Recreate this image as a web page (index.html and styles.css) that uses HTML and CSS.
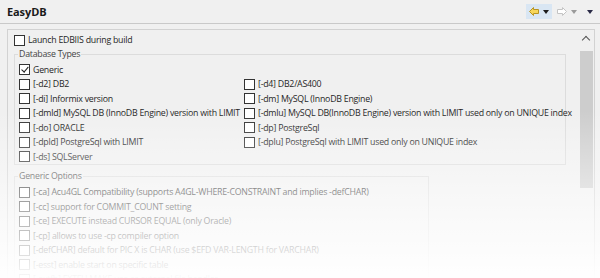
FILE: index.html
```html
<!DOCTYPE html>
<html lang="en">
<head>
    <meta charset="UTF-8">
    <title>EasyDB</title>
    <link rel="stylesheet" href="styles.css">
</head>
<body>
<div class="view">
    <div class="titlebar">
        <span class="title">EasyDB</span>
        <div class="tools">
            <span class="tool active">
                <svg width="10" height="9" viewBox="0 0 10 9"><path d="M0.5 4.5 L4.5 0.5 L4.5 2.5 L9.5 2.5 L9.5 6.5 L4.5 6.5 L4.5 8.5 Z" fill="#f7d65a" stroke="#b89422"/></svg>
                <span class="tri"></span>
            </span>
            <span class="tool">
                <svg width="10" height="9" viewBox="0 0 10 9"><path d="M9.5 4.5 L5.5 0.5 L5.5 2.5 L0.5 2.5 L0.5 6.5 L5.5 6.5 L5.5 8.5 Z" fill="#fff" stroke="#c4c4c4"/></svg>
                <span class="tri light"></span>
            </span>
            <span class="tool"><span class="tri dark"></span></span>
        </div>
    </div>

    <div class="frame">
        <div class="content">
            <label class="check top"><span class="box"></span>Launch EDBIIS during build</label>

            <fieldset class="group">
                <legend>Database Types</legend>
                <label class="check"><span class="box checked"></span>Generic</label>
                <div class="cols">
                    <label class="check"><span class="box"></span>[-d2] DB2</label>
                    <label class="check"><span class="box"></span>[-d4] DB2/AS400</label>
                    <label class="check"><span class="box"></span>[-di] Informix version</label>
                    <label class="check"><span class="box"></span>[-dm] MySQL (InnoDB Engine)</label>
                    <label class="check"><span class="box"></span>[-dmld] MySQL DB (InnoDB Engine) version with LIMIT</label>
                    <label class="check"><span class="box"></span>[-dmlu] MySQL DB(InnoDB Engine) version with LIMIT used only on UNIQUE index</label>
                    <label class="check"><span class="box"></span>[-do] ORACLE</label>
                    <label class="check"><span class="box"></span>[-dp] PostgreSql</label>
                    <label class="check"><span class="box"></span>[-dpld] PostgreSql with LIMIT</label>
                    <label class="check"><span class="box"></span>[-dplu] PostgreSql with LIMIT used only on UNIQUE index</label>
                    <label class="check"><span class="box"></span>[-ds] SQLServer</label>
                </div>
            </fieldset>

            <fieldset class="group narrow">
                <legend>Generic Options</legend>
                <label class="check"><span class="box"></span>[-ca] Acu4GL Compatibility (supports A4GL-WHERE-CONSTRAINT and implies -defCHAR)</label>
                <label class="check"><span class="box"></span>[-cc] support for COMMIT_COUNT setting</label>
                <label class="check"><span class="box"></span>[-ce] EXECUTE instead CURSOR EQUAL (only Oracle)</label>
                <label class="check"><span class="box"></span>[-cp] allows to use -cp compiler option</label>
                <label class="check"><span class="box"></span>[-defCHAR] default for PIC X is CHAR (use $EFD VAR-LENGTH for VARCHAR)</label>
                <label class="check"><span class="box"></span>[-esst] enable start on specific table</label>
                <label class="check"><span class="box"></span>[-extfh] EXTFH MAKE use as external file handler</label>
            </fieldset>
        </div>
        <div class="scrollbar">
            <span class="arrow"></span>
            <span class="thumb"></span>
        </div>
    </div>
    <div class="fade"></div>
</div>
</body>
</html>
```

FILE: styles.css
```css
html, body { margin: 0; }
body {
    font-family: "Open Sans", "Noto Sans", sans-serif;
    font-size: 8.8px;
    letter-spacing: -0.25px;
    color: #262626;
    background: #f0f0f0;
    width: 600px;
    height: 278px;
    overflow: hidden;
}
.view { position: relative; height: 278px; overflow: hidden; }

/* -------- title bar -------- */
.titlebar {
    display: flex;
    align-items: center;
    justify-content: space-between;
    height: 23px;
    padding: 0 4px 0 7px;
    border-bottom: 1px solid #c9c9c9;
}
.title { font-weight: 700; font-size: 11px; letter-spacing: -0.1px; color: #1a1a1a; }
.tools { display: flex; align-items: center; gap: 2px; }
.tool {
    display: flex; align-items: center; gap: 4px;
    height: 15px; padding: 0 3px;
}
.tool.active { background: #d9e6f3; }
.tool svg { display: block; }
.tri {
    width: 0; height: 0;
    border-left: 3.5px solid transparent;
    border-right: 3.5px solid transparent;
    border-top: 4px solid #1c1c1c;
}
.tri.light { border-top-color: #9a9a9a; }
.tri.dark { border-top-color: #2a2a46; margin-left: 2px; }

/* -------- scrolled frame -------- */
.frame {
    display: flex;
    margin: 5px 5px 0 7px;
    height: 260px;
    border: 1px solid #d2d2d2;
    background: #f0f0f0;
}
.content { flex: 1; padding: 3px 13px 0 6px; min-width: 0; overflow: hidden; }
.scrollbar {
    width: 14px;
    padding-right: 1px;
    display: flex; flex-direction: column; align-items: center;
    background: #f0f0f0;
}
.arrow {
    margin-top: 7px;
    width: 5px; height: 5px;
    border-left: 1.5px solid #555;
    border-top: 1.5px solid #555;
    transform: rotate(45deg);
}
.thumb {
    margin-top: 8px;
    width: 13px; height: 137px;
    background: #cdcdcd;
}

/* -------- checkboxes -------- */
.check {
    display: flex; align-items: center;
    height: 14.5px;
    white-space: nowrap;
}
.box {
    width: 9px; height: 9px;
    border: 1px solid #333;
    background: #fff;
    margin-right: 3px;
    flex: none;
    position: relative;
}
.box.checked::after {
    content: "";
    position: absolute;
    left: 3px; top: 0px;
    width: 2.5px; height: 6px;
    border-right: 1.2px solid #222;
    border-bottom: 1.2px solid #222;
    transform: rotate(40deg);
}

/* -------- groups -------- */
.group {
    margin: 0;
    padding: 2px 4px 0 4px;
    border: 1px solid #dcdcdc;
    min-width: 0;
}
.group legend { padding: 0 1px; margin-left: -1px; color: #444; line-height: 13px; }
.group + .group { margin-top: 5px; }
.group.narrow { width: 405px; }
.cols { display: grid; grid-template-columns: 225px 1fr; }

/* -------- fade-out -------- */
.fade {
    position: absolute;
    left: 0; right: 0; top: 110px; bottom: 0;
    background: linear-gradient(rgba(255,255,255,0), rgba(255,255,255,0.45) 45%, rgba(255,255,255,0.97));
    pointer-events: none;
}
```
